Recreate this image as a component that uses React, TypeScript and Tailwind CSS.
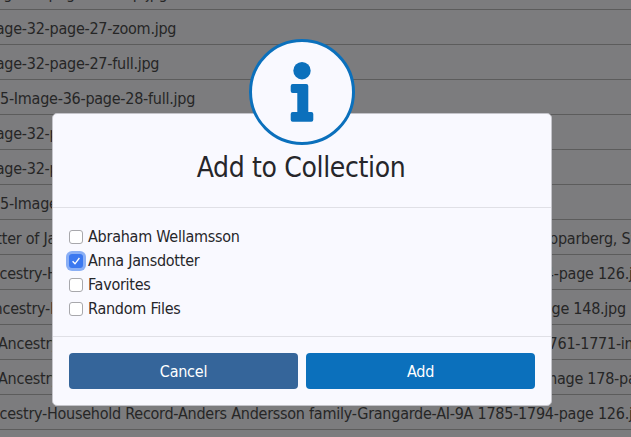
import React from 'react';

const rows = [
  { label: 'Image-32-page-27-crop.jpg', shift: '-ml-[23px]' },
  { label: 'Image-32-page-27-zoom.jpg', shift: '-ml-[22px]' },
  { label: 'Image-32-page-27-full.jpg', shift: '-ml-[22px]' },
  { label: '5-Image-36-page-28-full.jpg', shift: '-ml-[0px]' },
  { label: 'Image-32-page-29-zoom.jpg', shift: '-ml-[22px]' },
  { label: 'Image-32-page-29-full.jpg', shift: '-ml-[22px]' },
  { label: '5-Image-36-page-30-full.jpg', shift: '-ml-[0px]' },
  { label: 'Anna Jansdotter of Jan Andersson, born 1771 in Grangarde Parish, Dalarna County, Stora Kopparberg, Sweden', shift: '-ml-[90px]' },
  { label: 'Ancestry-Household Record-Anders Andersson family-Grangarde-AI-9A 1785-1794-page 126.jpg', shift: '-ml-[19px]' },
  { label: 'Ancestry-Household Record-Anders Andersson family-Grangarde-AI-9A, 1785-image 148.jpg', shift: '-ml-[16px]' },
  { label: 'Ancestry-Household Record-Anders Andersson family-Grangarde-AI-9A-1-123 1761-1771-image 42.jpg', shift: '-ml-[2px]' },
  { label: 'Ancestry-Household Record-Anders Andersson family-Grangarde-AI-9A, 1785-image 178-page 2.jpg', shift: '-ml-[2px]' },
  { label: 'Ancestry-Household Record-Anders Andersson family-Grangarde-AI-9A 1785-1794-page 126.jpg', shift: '-ml-[19px]' },
  { label: 'Ancestry-Household Record-Anders Andersson family-Grangarde-AI-9A 1785-1794-page 128.jpg', shift: '-ml-[19px]' },
];

const collections = [
  { name: 'Abraham Wellamsson', checked: false },
  { name: 'Anna Jansdotter', checked: true },
  { name: 'Favorites', checked: false },
  { name: 'Random Files', checked: false },
];

const InfoGlyph = () => (
  <svg width="28" height="64" viewBox="0 0 28 64" fill="#0b70bc">
    <circle cx="14" cy="10.7" r="8.7" />
    <path d="M4.7 24H18.3a2 2 0 0 1 2 2V52H23.3a2 2 0 0 1 2 2v5.7a2 2 0 0 1-2 2H4.7a2 2 0 0 1-2-2V54a2 2 0 0 1 2-2H9.3V33H4.7a2 2 0 0 1-2-2V26a2 2 0 0 1 2-2Z" />
  </svg>
);

export default function App() {
  return (
    <div className="relative h-[437px] w-[631px] overflow-hidden bg-[#7c7c7e] font-['DejaVu_Sans_Condensed','DejaVu_Sans',sans-serif] tracking-[-0.25px] text-[#262626]">
      {/* File list behind the backdrop */}
      <div className="-mt-[25px]">
        {rows.map((row, i) => (
          <div key={i} className="flex h-[35px] items-center overflow-hidden border-b border-[#5c5c5c] pt-[3px] text-[16px] whitespace-nowrap">
            <span className={row.shift}>{row.label}</span>
          </div>
        ))}
      </div>

      {/* Dialog */}
      <div className="absolute top-[113px] left-[52px] w-[500px] rounded-[5px] border border-[#c4c4ca] bg-[#f9f9ff]">
        <h2 className="flex h-[93px] items-end justify-center pr-[2px] pb-[25px] text-[28px] leading-none tracking-[-0.35px] text-[#26262a]">Add to Collection</h2>
        <div className="flex h-[130px] flex-col border-y border-[#e0e0e6] pt-[16px] pl-[16px]">
          {collections.map((c) => (
            <label key={c.name} className="flex h-[24px] items-center gap-[5px] pt-[1px] text-[16px] text-[#26262a]">
              <span className="relative flex h-[14px] w-[14px]">
                <input
                  type="checkbox"
                  defaultChecked={c.checked}
                  className={
                    c.checked
                      ? 'h-[14px] w-[14px] appearance-none rounded-[3px] bg-[#3b78f0] ring-[3px] ring-[#8aaff5]'
                      : 'h-[14px] w-[14px] appearance-none rounded-[3px] border border-[#a8a8ac] bg-white'
                  }
                />
                {c.checked && (
                  <svg className="absolute top-0 left-0" width="14" height="14" viewBox="0 0 14 14" fill="none" stroke="#fff" strokeWidth="1.3">
                    <path d="M3.6 7.2 6 9.8 10.4 4" />
                  </svg>
                )}
              </span>
              {c.name}
            </label>
          ))}
        </div>
        <div className="flex gap-[8px] p-[16px]">
          <button className="h-[36px] flex-1 rounded-[4px] bg-[#35659a] pt-[2px] text-[16px] text-white">Cancel</button>
          <button className="h-[36px] flex-1 rounded-[4px] bg-[#0b70bc] pt-[2px] text-[16px] text-white">Add</button>
        </div>
      </div>

      {/* Icon badge overlapping the dialog */}
      <div className="absolute top-[39px] left-[249px] flex h-[106px] w-[106px] items-center justify-center rounded-full border-[3px] border-[#0b70bc] bg-[#f9f9ff]">
        <InfoGlyph />
      </div>
    </div>
  );
}
